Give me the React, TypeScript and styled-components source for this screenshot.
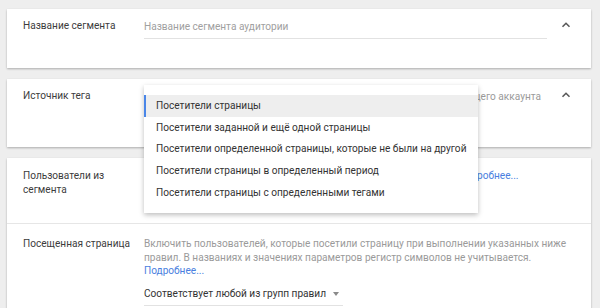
import React from "react";
import styled, { createGlobalStyle } from "styled-components";

const GlobalStyle = createGlobalStyle`
  html, body {
    margin: 0;
    padding: 0;
    background: #eeeeee;
    font-family: Roboto, "Liberation Sans", Arial, sans-serif;
    font-size: 10.1px;
    color: #3c3c3c;
  }
`;

const Page = styled.div`
  display: flex;
  flex-direction: column;
  gap: 11px;
  padding: 9px 9px 0 7px;
  height: 308px;
  box-sizing: border-box;
  overflow: hidden;
`;

const Card = styled.div`
  position: relative;
  background: #ffffff;
  box-shadow: 0 1px 2px rgba(0, 0, 0, 0.28);
`;

const Row = styled.div<{ $height?: number }>`
  display: grid;
  grid-template-columns: 137px 1fr 44px;
  padding-top: 10px;
  min-height: ${({ $height }) => ($height ? `${$height}px` : "auto")};
  box-sizing: border-box;
  line-height: 14px;
`;

const Section = styled.div<{ $divider?: boolean; $height?: number }>`
  display: grid;
  grid-template-columns: 137px 1fr;
  padding: ${({ $divider }) => ($divider ? "13px" : "11px")} 14px 12px 0;
  min-height: ${({ $height }) => ($height ? `${$height}px` : "auto")};
  box-sizing: border-box;
  line-height: 14px;
  border-top: ${({ $divider }) => ($divider ? "1px solid #e6e6e6" : "none")};
`;

const Label = styled.div`
  padding-left: 16px;
  color: #3c3c3c;
`;

const Field = styled.div`
  position: relative;
  min-width: 0;
`;

const TextInput = styled.div`
  color: #a0a0a0;
  padding: 1px 0 4px;
  border-bottom: 1px solid #e2e2e2;
`;

const Muted = styled.div`
  color: #9a9a9a;
  white-space: nowrap;
  overflow: hidden;
  padding-top: 1px;
`;

const Description = styled.div`
  color: #9a9a9a;
  line-height: 13.5px;
  max-width: 428px;
`;

const LinkText = styled.a`
  color: #4a7fe0;
  text-decoration: none;
  cursor: pointer;
`;

const BlockLink = styled(LinkText)`
  display: block;
`;

const ChevronButton = styled.button`
  justify-self: start;
  align-self: start;
  margin: 1px 0 0 14px;
  padding: 0;
  border: none;
  background: none;
  width: 10px;
  height: 10px;
  display: flex;
  cursor: pointer;
`;

const Select = styled.div`
  margin-top: 9px;
  width: 199px;
  display: flex;
  align-items: center;
  gap: 7px;
  padding-bottom: 4px;
  border-bottom: 1px solid #e2e2e2;
  color: #333333;
  white-space: nowrap;
`;

const Caret = styled.span`
  width: 0;
  height: 0;
  border-left: 3.5px solid transparent;
  border-right: 3.5px solid transparent;
  border-top: 4px solid #8a8a8a;
`;

const Menu = styled.ul`
  position: absolute;
  top: 6px;
  left: 137px;
  width: 334px;
  margin: 0;
  padding: 10px 0;
  list-style: none;
  background: #ffffff;
  box-shadow: 0 2px 5px rgba(0, 0, 0, 0.26);
  z-index: 10;
`;

const MenuItem = styled.li<{ $active?: boolean }>`
  height: 21.6px;
  display: flex;
  align-items: center;
  padding-left: 10px;
  color: #333333;
  white-space: nowrap;
  background: ${({ $active }) => ($active ? "#eeeeee" : "transparent")};
  border-left: 2px solid ${({ $active }) => ($active ? "#4a86e8" : "transparent")};
`;

const Chevron = () => (
  <ChevronButton aria-label="Свернуть">
    <svg width="10" height="10" viewBox="0 0 10 10">
      <path d="M1.5 6.8 L5 3.3 L8.5 6.8" fill="none" stroke="#5a5a5a" strokeWidth="1.6" />
    </svg>
  </ChevronButton>
);

const options = [
  "Посетители страницы",
  "Посетители заданной и ещё одной страницы",
  "Посетители определенной страницы, которые не были на другой",
  "Посетители страницы в определенный период",
  "Посетители страницы с определенными тегами",
];

export default function App() {
  return (
    <>
      <GlobalStyle />
      <Page>
        <Card>
          <Row $height={59}>
            <Label>Название сегмента</Label>
            <Field>
              <TextInput>Название сегмента аудитории</TextInput>
            </Field>
            <Chevron />
          </Row>
        </Card>

        <Card>
          <Row $height={68}>
            <Label>Источник тега</Label>
            <Field>
              <Muted>Тег Google Рекламы, установленный на сайтах и в приложениях текущего аккаунта</Muted>
            </Field>
            <Chevron />
          </Row>
          <Menu>
            {options.map((o, i) => (
              <MenuItem key={o} $active={i === 0}>
                {o}
              </MenuItem>
            ))}
          </Menu>
        </Card>

        <Card>
          <Section $height={65}>
            <Label>
              Пользователи из
              <br />
              сегмента
            </Label>
            <Description>
              Включить в сегмент пользователей, соответствующих условиям. <LinkText>Подробнее...</LinkText>
            </Description>
          </Section>
          <Section $divider>
            <Label>Посещенная страница</Label>
            <div>
              <Description>
                Включить пользователей, которые посетили страницу при выполнении указанных ниже
                правил. В названиях и значениях параметров регистр символов не учитывается.
                <BlockLink>Подробнее...</BlockLink>
              </Description>
              <Select>
                Соответствует любой из групп правил
                <Caret />
              </Select>
            </div>
          </Section>
        </Card>
      </Page>
    </>
  );
}
